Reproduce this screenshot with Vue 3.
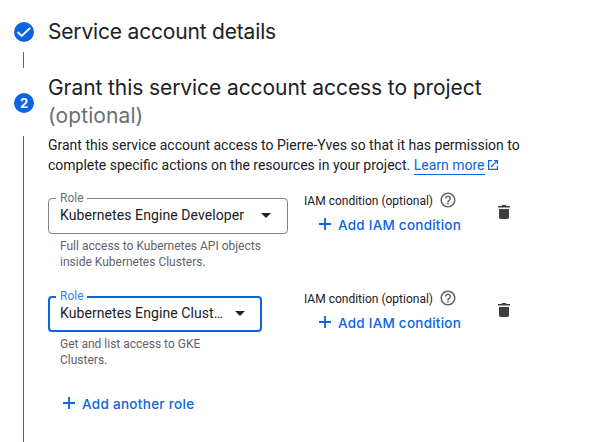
<script setup>
const roles = [
  {
    name: 'Kubernetes Engine Developer',
    help: 'Full access to Kubernetes API objects inside Kubernetes Clusters.',
    focused: false,
  },
  {
    name: 'Kubernetes Engine Clust…',
    help: 'Get and list access to GKE Clusters.',
    focused: true,
  },
]
</script>

<template>
  <main class="stepper">
    <div class="rail">
      <svg class="check" viewBox="0 0 20 20">
        <circle cx="10" cy="10" r="10" />
        <path d="M3.6 10 7.700 14 16.200 5.800" />
      </svg>
      <i class="line short"></i>
      <span class="number">2</span>
      <i class="line long"></i>
    </div>
    <div class="content">
      <h2 class="first"><span class="t1">Service account details</span></h2>
      <h2 class="second">
        <span class="t2">Grant this service account access to project</span><br />
        <span class="optional">(optional)</span>
      </h2>
      <p class="intro">
        <span>Grant this service account access to Pierre-Yves so that it has permission to</span><br />
        <span>complete specific actions on the resources in your project.</span>
        <a class="more">Learn more</a>
        <svg class="ext" viewBox="0 0 10 10">
          <path d="M4.2.6H.6v8.800h8.800V5.800M6 .6h3.400V4M9.300.7 3 7" />
        </svg>
      </p>
      <section v-for="role in roles" :key="role.name" class="row">
        <div class="role" :class="{ focused: role.focused }">
          <div class="select">
            <label class="label">Role</label>
            <span class="name">{{ role.name }}</span>
            <svg class="arrow" viewBox="0 0 10 5"><path d="M0 0h10L5 5z" /></svg>
          </div>
          <p class="help">{{ role.help }}</p>
        </div>
        <div class="condition">
          <div class="caption">
            <span class="iam">IAM condition (optional)</span>
            <svg class="question" viewBox="0 0 24 24">
              <path d="M11 18h2v-2h-2v2zm1-16C6.48 2 2 6.48 2 12s4.48 10 10 10 10-4.480 10-10S17.520 2 12 2zm0 18c-4.410 0-8-3.590-8-8s3.590-8 8-8 8 3.590 8 8-3.590 8-8 8zm0-14c-2.210 0-4 1.790-4 4h2c0-1.100.9-2 2-2s2 .9 2 2c0 2-3 1.750-3 5h2c0-2.250 3-2.500 3-5 0-2.210-1.790-4-4-4z" />
            </svg>
          </div>
          <button class="add">
            <svg class="plus" viewBox="0 0 12 12"><path d="M6 0v12M0 6h12" /></svg>
            <span>Add IAM condition</span>
          </button>
        </div>
        <svg class="trash" viewBox="0 0 12 14">
          <path d="M0 1h3.500l.6-1h3.800l.6 1H12v1.600H0zM1 4h10v8.200c0 1-.8 1.800-1.800 1.800H2.800C1.800 14 1 13.200 1 12.200z" />
        </svg>
      </section>
      <button class="add another">
        <svg class="plus" viewBox="0 0 12 12"><path d="M6 0v12M0 6h12" /></svg>
        <span>Add another role</span>
      </button>
    </div>
  </main>
</template>

<style>
body {
  margin: 0;
  background: #fff;
}
</style>

<style scoped>
.stepper {
  display: flex;
  width: 605px;
  height: 442px;
  overflow: hidden;
  font-family: Roboto, sans-serif;
  color: #202124;
}
.rail {
  width: 48px;
  flex: none;
  display: flex;
  flex-direction: column;
  align-items: center;
  padding-top: 22px;
  box-sizing: border-box;
}
.check {
  width: 20px;
  height: 20px;
  flex: none;
}
.check circle {
  fill: #0b65e0;
}
.check path {
  fill: none;
  stroke: #fff;
  stroke-width: 1.8;
}
.line {
  width: 1px;
  margin-right: 1px;
  background: #5f6368;
}
.short {
  height: 16px;
  margin-top: 10px;
}
.long {
  flex: 1;
  margin-top: 23px;
}
.number {
  width: 20px;
  height: 20px;
  margin-top: 25px;
  border-radius: 50%;
  background: #0b65e0;
  color: #fff;
  font: 700 13px/20px Inter, sans-serif;
  text-align: center;
}
.content {
  flex: 1;
}
h2 {
  margin: 0;
  font: 400 21px/28px Inter, sans-serif;
  white-space: nowrap;
}
.first {
  padding-top: 18px;
}
.second {
  padding-top: 28px;
}
.t1 {
  letter-spacing: -0.18px;
}
.t2 {
  letter-spacing: -0.08px;
}
.optional {
  color: #6b6e73;
  letter-spacing: 0.1px;
}
.intro {
  margin: 5px 0 0;
  font-size: 14px;
  line-height: 20px;
  white-space: nowrap;
}
.more {
  color: #0b65e0;
  display: inline-block;
  height: 17px;
  line-height: 17px;
  margin-left: 3.500px;
  border-bottom: 1px solid #0b65e0;
}
.ext {
  width: 10px;
  height: 10px;
  margin-left: 3.500px;
  fill: none;
  stroke: #0b65e0;
  stroke-width: 1.2;
}
.row {
  display: flex;
  height: 98px;
  align-items: flex-start;
}
.intro + .row {
  margin-top: 16px;
}
.role {
  width: 240px;
  margin-right: 16px;
}
.select {
  position: relative;
  display: flex;
  align-items: center;
  height: 36px;
  margin-top: 7px;
  padding: 0 16px 0 11px;
  box-sizing: border-box;
  border: 1px solid #80868b;
  border-radius: 4px;
  justify-content: space-between;
  font-size: 14px;
  line-height: 20px;
  letter-spacing: 0.08px;
}
.focused .select {
  width: 214px;
  border: 2px solid #0b65e0;
  padding: 0 15px 0 10px;
}
.label {
  position: absolute;
  top: -8px;
  left: 7px;
  padding: 0 3px 0 4px;
  background: #fff;
  font-size: 12px;
  line-height: 14px;
  letter-spacing: 0;
  color: #6b6e73;
}
.focused .label {
  top: -9px;
  left: 6px;
  color: #3b7ee2;
}
.name {
  padding-bottom: 2px;
  white-space: nowrap;
}
.arrow {
  width: 10px;
  height: 5px;
  margin-bottom: 1px;
  fill: #202124;
}
.help {
  margin: 4px 0 0 12px;
  width: 205px;
  font-size: 12px;
  line-height: 16px;
  color: #5f6368;
}
.focused .help {
  width: 160px;
}
.condition {
  width: 194px;
}
.caption {
  display: flex;
  align-items: center;
  height: 18px;
  font-size: 12px;
  white-space: nowrap;
}
.iam {
  width: 135px;
  padding-top: 2px;
}
.question {
  width: 18px;
  height: 18px;
  fill: #5f6368;
}
.add {
  display: flex;
  align-items: center;
  height: 20px;
  margin: 6px 0 0 15px;
  padding: 0;
  border: 0;
  background: none;
  color: #0b65e0;
  font: 500 13.5px/20px Inter, sans-serif;
  letter-spacing: 0.24px;
  white-space: nowrap;
}
.plus {
  width: 12px;
  height: 12px;
  margin: 0 7px 2px 0;
  stroke: #0b65e0;
  stroke-width: 1.8;
}
.trash {
  width: 12px;
  height: 14px;
  margin-top: 14px;
  fill: #3c4043;
}
.another {
  margin-top: 7px;
  letter-spacing: 0.3px;
}
</style>
